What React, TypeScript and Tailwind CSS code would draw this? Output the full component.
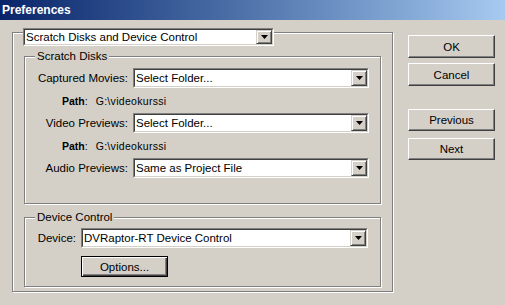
import React from "react"

function Arrow() {
  return (
    <div className="flex w-[16px] h-full items-center justify-center bg-[#d4d0c8] border border-t-[#d4d0c8] border-l-[#d4d0c8] border-r-[#404040] border-b-[#404040] shadow-[inset_1px_1px_0_#fff,inset_-1px_-1px_0_#808080]">
      <svg width="7" height="4" viewBox="0 0 7 4">
        <polygon points="0,0 7,0 3.5,4" fill="#000" />
      </svg>
    </div>
  )
}

function Combo({ value, className }: { value: string; className: string }) {
  return (
    <div className={`flex bg-white border border-t-[#808080] border-l-[#808080] border-r-white border-b-white ${className}`}>
      <div className="flex flex-1 min-w-0 items-stretch border border-t-[#404040] border-l-[#404040] border-r-[#d4d0c8] border-b-[#d4d0c8]">
        <span className="flex-1 flex items-center pl-[1px] whitespace-nowrap overflow-hidden">{value}</span>
        <Arrow />
      </div>
    </div>
  )
}

function Button({ label, className }: { label: string; className: string }) {
  return (
    <div className={`flex items-center justify-center border border-t-white border-l-white border-r-[#404040] border-b-[#404040] shadow-[inset_-1px_-1px_0_#808080] ${className}`}>
      {label}
    </div>
  )
}

function PathRow() {
  return (
    <div className="flex h-[25px] items-center pl-[37px] text-[10.5px]">
      <span className="font-bold">Path</span>
      <span>:</span>
      <span className="ml-[8px] tracking-[0.3px]">G:\videokurssi</span>
    </div>
  )
}

function Field({ label, value }: { label: string; value: string }) {
  return (
    <div className="flex items-center">
      <div className="w-[103px] text-right">{label}</div>
      <Combo value={value} className="ml-[5px] w-[236px] h-[20px]" />
    </div>
  )
}

export default function App() {
  return (
    <div className="w-[505px] h-[305px] overflow-hidden bg-[#d4d0c8] text-black text-[11.5px] leading-[14px] [font-family:'Liberation_Sans',Arial,sans-serif]">
      <div className="flex h-[20px] items-center pl-[2px] bg-gradient-to-r from-[#0a246a] to-[#a6caf0] text-white font-bold text-[12px]">
        Preferences
      </div>
      <div className="flex items-start">
        <div className="ml-[12px] mt-[12px] w-[381px] border border-[#808080] shadow-[inset_1px_1px_0_#fff,1px_1px_0_#fff] pb-[4px]">
          <Combo value="Scratch Disks and Device Control" className="-mt-[5px] ml-[10px] w-[251px] h-[18px]" />

          <div className="relative mt-[10px] ml-[11px] w-[357px] h-[148px] border border-[#808080] shadow-[inset_1px_1px_0_#fff,1px_1px_0_#fff] pt-[11px]">
            <div className="absolute -top-[8px] left-[10px] px-[2px] bg-[#d4d0c8]">Scratch Disks</div>
            <Field label="Captured Movies:" value="Select Folder..." />
            <PathRow />
            <Field label="Video Previews:" value="Select Folder..." />
            <PathRow />
            <Field label="Audio Previews:" value="Same as Project File" />
          </div>

          <div className="relative mt-[13px] ml-[11px] w-[357px] h-[70px] border border-[#808080] shadow-[inset_1px_1px_0_#fff,1px_1px_0_#fff] pt-[10px]">
            <div className="absolute -top-[8px] left-[10px] px-[2px] bg-[#d4d0c8]">Device Control</div>
            <div className="flex items-center">
              <div className="w-[51px] text-right">Device:</div>
              <Combo value="DVRaptor-RT Device Control" className="ml-[5px] w-[287px] h-[20px]" />
            </div>
            <div className="mt-[8px] ml-[56px] flex w-[87px] h-[21px] items-center justify-center border border-black shadow-[inset_1px_1px_0_#fff,inset_-1px_-1px_0_#404040,inset_-2px_-2px_0_#808080]">
              Options...
            </div>
          </div>
        </div>

        <div className="ml-[15px] mt-[15px] flex flex-col">
          <Button label="OK" className="w-[87px] h-[23px]" />
          <Button label="Cancel" className="mt-[5px] w-[87px] h-[23px]" />
          <Button label="Previous" className="mt-[23px] w-[87px] h-[22px]" />
          <Button label="Next" className="mt-[7px] w-[87px] h-[22px]" />
        </div>
      </div>
    </div>
  )
}
